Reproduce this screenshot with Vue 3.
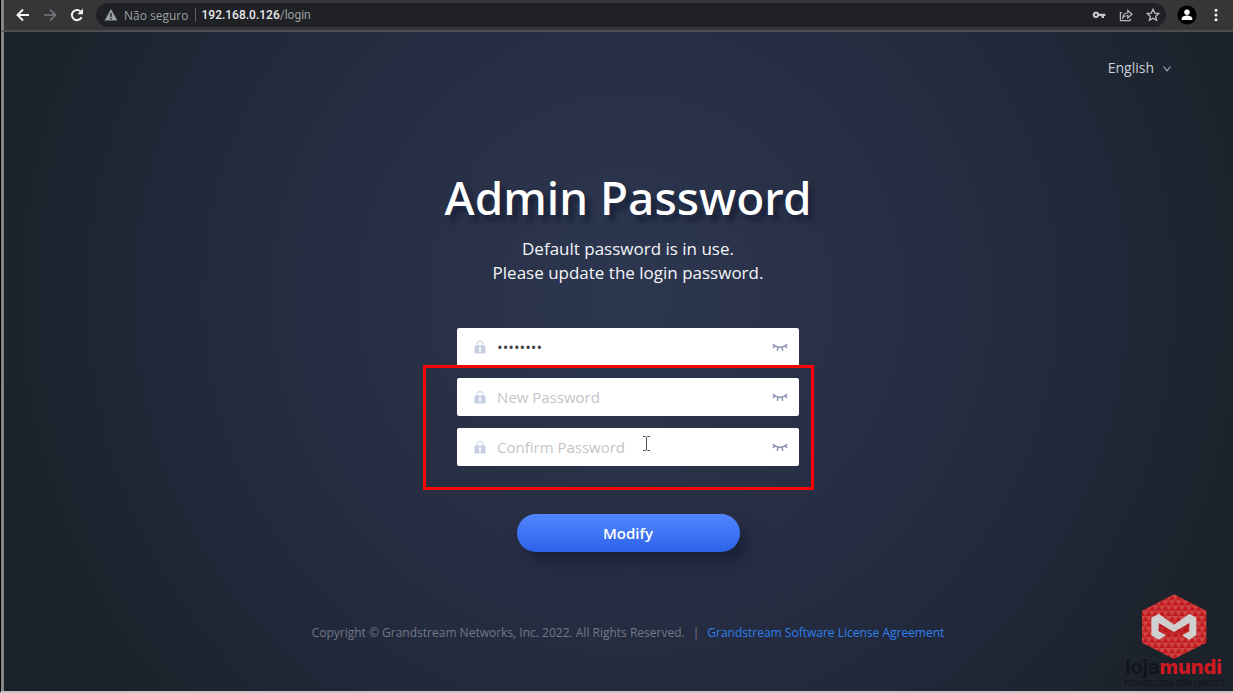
<script setup>
import { ref } from 'vue'

const fields = ref([
  { id: 'current', label: 'Current Password', placeholder: '', value: 'admin123' },
  { id: 'new', label: 'New Password', placeholder: 'New Password', value: '' },
  { id: 'confirm', label: 'Confirm Password', placeholder: 'Confirm Password', value: '' }
])
const address = ref('192.168.0.126/login')
</script>

<template>
  <div class="window">
    <header class="toolbar">
      <button class="tool" aria-label="Back">
        <svg width="16" height="16" viewBox="0 0 16 16" fill="none" stroke="#f1f3f4" stroke-width="1.9"><path d="M14 8H3M8 2.5L2.5 8 8 13.5" /></svg>
      </button>
      <button class="tool" aria-label="Forward">
        <svg width="16" height="16" viewBox="0 0 16 16" fill="none" stroke="#77797c" stroke-width="1.6"><path d="M2 8h11M8 2.5L13.5 8 8 13.5" /></svg>
      </button>
      <button class="tool" aria-label="Reload">
        <svg width="16" height="16" viewBox="0 0 16 16"><path d="M12.6 10.2A5.1 5.1 0 1 1 11.6 4.4" fill="none" stroke="#f1f3f4" stroke-width="2" /><path d="M14 1.6V7.2H8.4z" fill="#f1f3f4" /></svg>
      </button>
      <div class="omnibox">
        <svg width="14" height="14" viewBox="0 0 14 14"><path d="M7 1L13.4 12.6H.6z" fill="#9aa0a6" /><path d="M7 5v4M7 10v1.5" stroke="#202124" stroke-width="1.4" /></svg>
        <span class="insecure">Não seguro</span>
        <span class="bar"></span>
        <span class="address"><b>{{ address.split('/')[0] }}</b>/{{ address.split('/')[1] }}</span>
        <span class="actions">
          <button class="tool" aria-label="Passwords">
            <svg width="14" height="14" viewBox="0 0 14 14"><path d="M4 3.6a3.3 3.3 0 1 0 3.1 4.5h2.4v2h2.5v-2h1.4V5.8H7.1A3.3 3.3 0 0 0 4 3.6zM4 5.8a1.1 1.1 0 1 1 0 2.3 1.1 1.1 0 0 1 0-2.3z" fill="#c4c7c9" fill-rule="evenodd" /></svg>
          </button>
          <button class="tool" aria-label="Share">
            <svg width="14" height="14" viewBox="0 0 14 14" fill="none" stroke="#b4b7b9" stroke-width="1.2"><path d="M3 4.5H1.4v8.2h9.8v-2M3.8 9.8c.2-3.2 2-4.8 5-4.8V2.4L13 6.3 8.8 10V7.500c-2.400 0-3.800.6-5 2.300z" /></svg>
          </button>
          <button class="tool" aria-label="Bookmark">
            <svg width="14" height="14" viewBox="0 0 14 14" fill="none" stroke="#c4c7c9" stroke-width="1.2"><path d="M7 1.300l1.700 3.800 4.100.4-3.100 2.700.9 4.100L7 10.200l-3.600 2.100.9-4.100L1.200 5.500l4.100-.4z" /></svg>
          </button>
        </span>
      </div>
      <button class="tool" aria-label="Profile">
        <svg width="20" height="20" viewBox="0 0 20 20"><circle cx="10" cy="10" r="9.5" fill="#000" /><circle cx="10" cy="7.200" r="2.700" fill="#fff" /><path d="M4.700 15v-1.500c0-2 3-3 5.300-3s5.300 1 5.300 3V15z" fill="#fff" /></svg>
      </button>
      <button class="tool" aria-label="Menu">
        <svg width="16" height="16" viewBox="0 0 16 16" fill="#f1f3f4"><circle cx="8" cy="3.300" r="1.500" /><circle cx="8" cy="8" r="1.500" /><circle cx="8" cy="12.700" r="1.500" /></svg>
      </button>
    </header>

    <main class="page">
      <div class="top">
        <button class="language">
          English
          <svg width="10" height="10" viewBox="0 0 10 10" fill="none" stroke="#aab2c0" stroke-width="1.1"><path d="M1.500 3.500L5 7.800 8.500 3.500" /></svg>
        </button>
      </div>

      <h1>Admin Password</h1>
      <p class="hint">Default password is in use.<br />Please update the login password.</p>

      <form @submit.prevent>
        <div v-for="f in fields" :key="f.id" class="field">
          <svg width="12" height="14" viewBox="0 0 12 14"><path d="M3 6V4.200a3 3 0 0 1 6 0V6" fill="none" stroke="#d9dfec" stroke-width="1.4" /><rect x=".5" y="5.500" width="11" height="8" rx="1" fill="#c6cfe2" /><path d="M6 7.200a1.300 1.300 0 0 1 .7 2.400V12H5.300V9.600A1.300 1.300 0 0 1 6 7.200z" fill="#fff" /></svg>
          <input :id="f.id" v-model="f.value" type="password" :placeholder="f.placeholder" :aria-label="f.label" />
          <button type="button" class="eye" :aria-label="'Show ' + f.label">
            <svg width="16" height="10" viewBox="0 0 16 10" fill="none" stroke="#9097b0" stroke-width="1.600"><path d="M.8 2.300Q8 8.300 15.200 2.300M3 3.800L.8 5.900M6 5.100L5.300 8.800M10 5.100l.7 3.700M13 3.800l2.200 2.100" /></svg>
          </button>
        </div>
        <div class="highlight"></div>
        <svg class="pointer" width="9" height="15" viewBox="0 0 9 15" fill="none" stroke="#555"><path d="M1 .5h2.500l1 .8 1-.8H8M4.500 1v13M1 14.500h2.500l1-.8 1 .8H8" /></svg>
        <button class="submit">Modify</button>
      </form>

      <footer>
        <span>Copyright © Grandstream Networks, Inc. 2022. All Rights Reserved.</span>
        <span>|</span>
        <a href="#">Grandstream Software License Agreement</a>
      </footer>
    </main>

    <div class="brand">
      <svg width="66" height="66" viewBox="92 26 198 198">
        <defs>
          <pattern id="facets" x="95" y="28" width="20" height="32" patternUnits="userSpaceOnUse">
            <rect width="20" height="32" fill="#cf4644" />
            <path d="M0 16L10 0 20 16zM-10 32L0 16 10 32zM10 32L20 16 30 32z" fill="#c11a20" />
          </pattern>
        </defs>
        <path d="M191 27L288 76V172L191 221 95 172V76z" fill="url(#facets)" />
        <path d="M145 113L191 140 237 113V138L215 150H167L145 138z" fill="#b5141a" opacity=".5" />
        <path d="M123 97L145 85 191 118 237 85 258 97V150L237 163 215 150 237 138V113L191 140 145 113V138L167 150 145 163 123 150z" fill="#cfcfcf" />
      </svg>
      <div class="name"><span>loja</span><b>mundi</b></div>
      <div class="tagline">TECNOLOGIA SEM LIMITES</div>
    </div>
  </div>
</template>

<style>
body {
  margin: 0;
  background: #1b2129;
}
</style>

<style scoped>
* {
  box-sizing: border-box;
}
.window {
  position: relative;
  display: flex;
  flex-direction: column;
  min-height: 100vh;
  border-left: 1px solid #000;
  border-bottom: 2px solid #c4c4c6;
  font-family: "Open Sans", "Noto Sans", sans-serif;
}
button {
  border: 0;
  padding: 0;
  background: none;
  font-family: inherit;
}
svg {
  display: block;
  flex: none;
}
.toolbar {
  display: flex;
  align-items: center;
  height: 32px;
  padding: 0 9px 0 11px;
  gap: 11px;
  background: #353638;
  border-bottom: 2px solid #4c4d50;
  border-left: 3px solid #858585;
}
.omnibox {
  flex: 1;
  display: flex;
  align-items: center;
  gap: 6px;
  height: 24px;
  padding: 0 6px 0 8px;
  border-radius: 12px;
  background: #202124;
  color: #9aa0a6;
  font-size: 12px;
}
.bar {
  width: 1px;
  height: 14px;
  background: #5f6368;
}
.address {
  font-family: Roboto, sans-serif;
}
.address b {
  color: #e8eaed;
  font-weight: 500;
}
.actions {
  display: flex;
  gap: 13px;
  margin-left: auto;
}
.page {
  flex: 1;
  display: flex;
  flex-direction: column;
  align-items: center;
  padding-left: 19px;
  border-left: 3px solid #858585;
  background: radial-gradient(circle at 51% 40%, #2c3750 0, #293147 190px, #262d42 310px, #23293d 440px, #1e2531 560px, #1b222a 650px);
}
.top {
  align-self: stretch;
  display: flex;
  justify-content: flex-end;
  padding: 24px 61px 0 0;
}
.language {
  display: flex;
  align-items: center;
  gap: 8px;
  color: #c9ced8;
  font-size: 14px;
  line-height: 24px;
}
h1 {
  margin: 87px 0 0;
  color: #fff;
  font-family: "Noto Sans", sans-serif;
  font-size: 46px;
  line-height: 60px;
  font-weight: 500;
  text-shadow: 5px 6px 5px #18213a;
}
.hint {
  margin: 10px 0 0;
  color: #f4f5f8;
  font-size: 17px;
  line-height: 24px;
  text-align: center;
}
form {
  position: relative;
  display: flex;
  flex-direction: column;
  align-items: center;
  gap: 12px;
  width: 342px;
  margin-top: 43px;
}
.field {
  display: flex;
  align-items: center;
  width: 100%;
  height: 38px;
  padding: 0 11px 0 17px;
  gap: 11px;
  border-radius: 2px;
  background: #fff;
}
input {
  flex: 1;
  min-width: 0;
  border: 0;
  padding: 0;
  outline: 0;
  background: none;
  color: #444;
  font-family: inherit;
  font-size: 15px;
}
input::placeholder {
  color: #c4c4ca;
  opacity: 1;
}
.highlight {
  position: absolute;
  top: 37px;
  left: -34px;
  right: -15px;
  height: 125px;
  border: 3px solid #fe0000;
  pointer-events: none;
}
.pointer {
  position: absolute;
  top: 108px;
  left: 185px;
}
.submit {
  width: 223px;
  height: 38px;
  margin-top: 36px;
  border-radius: 19px;
  background: linear-gradient(#5286ff, #2c62e8);
  box-shadow: 8px 10px 16px #19213a;
  color: #fff;
  font-size: 15px;
  font-weight: 600;
}
footer {
  display: flex;
  gap: 8px;
  margin-top: 70px;
  color: #717886;
  font-size: 12px;
  line-height: 22px;
}
footer a {
  color: #2e80ee;
  text-decoration: none;
}
.brand {
  position: absolute;
  right: 9px;
  bottom: 0;
  display: flex;
  flex-direction: column;
  align-items: center;
}
.name {
  color: #10141a;
  font-family: Inter, sans-serif;
  font-size: 20px;
  line-height: 15px;
  font-weight: 600;
}
.name b {
  color: #cf1a22;
  font-weight: 800;
}
.tagline {
  color: #11151b;
  font-family: Lato, sans-serif;
  font-size: 8px;
  line-height: 16px;
}
</style>
